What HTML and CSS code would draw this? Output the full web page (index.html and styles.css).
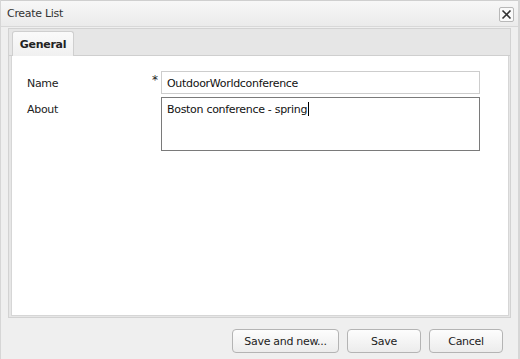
FILE: index.html
```html
<!DOCTYPE html>
<html>
<head>
<meta charset="utf-8">
<link rel="stylesheet" href="styles.css">
</head>
<body>
<div class="dialog">
  <div class="titlebar">
    <span class="title">Create List</span>
    <span class="close"><svg width="11" height="11" viewBox="0 0 11 11"><path d="M1.5 1.5 L9.5 9.5 M9.5 1.5 L1.5 9.5" stroke="#333" stroke-width="1.6" fill="none"/></svg></span>
  </div>
  <div class="body">
    <div class="tabpanel">
      <div class="tabstrip">
        <div class="tab">General</div>
      </div>
      <div class="content">
        <div class="row">
          <label class="label">Name</label>
          <span class="req">*</span>
          <div class="input">OutdoorWorldconference</div>
        </div>
        <div class="row">
          <label class="label">About</label>
          <span class="req"></span>
          <div class="textarea">Boston conference - spring<span class="caret"></span></div>
        </div>
      </div>
    </div>
    <div class="footer">
      <button class="btn btn-wide">Save and new...</button>
      <button class="btn">Save</button>
      <button class="btn">Cancel</button>
    </div>
  </div>
</div>
</body>
</html>
```
FILE: styles.css
```css
html, body { margin: 0; padding: 0; }
body {
  width: 520px;
  height: 359px;
  background: #f0f0f0;
  font-family: "DejaVu Sans", Verdana, sans-serif;
  font-size: 11px;
  letter-spacing: -0.3px;
  color: #222;
  overflow: hidden;
}
.dialog {
  box-sizing: border-box;
  width: 520px;
  height: 359px;
  display: flex;
  flex-direction: column;
  border-left: 1px solid #d6d6d6;
  border-right: 2px solid #d6d6d6;
  background: #efefef;
}
.titlebar {
  height: 25px;
  flex: none;
  display: flex;
  align-items: center;
  justify-content: space-between;
  padding: 0 4px 0 6px;
  background: linear-gradient(#f7f7f7, #ebebeb);
  border-top: 1px solid #cfcfcf;
  border-bottom: 1px solid #d8d8d8;
}
.title { font-size: 11px; color: #333; }
.close {
  box-sizing: border-box;
  width: 15px;
  height: 15px;
  border: 1px solid #b8b8b8;
  border-radius: 2px;
  background: #fafafa;
  display: flex;
  align-items: center;
  justify-content: center;
  margin-top: 1px;
}
.body {
  flex: 1;
  display: flex;
  flex-direction: column;
  padding: 1px 7px 0 7px;
}
.tabpanel {
  flex: 1;
  display: flex;
  flex-direction: column;
  border: 1px solid #d2d2d2;
  background: #e6e6e6;
}
.tabstrip {
  height: 26px;
  display: flex;
  align-items: flex-end;
  padding-left: 3px;
  border-bottom: 1px solid #cfcfcf;
  background: #e6e6e6;
}
.tab {
  box-sizing: border-box;
  width: 62px;
  height: 25px;
  margin-bottom: -1px;
  border: 1px solid #cfcfcf;
  border-bottom: none;
  border-radius: 3px 3px 0 0;
  background: linear-gradient(#fafafa, #f0f0f0);
  font-weight: bold;
  font-size: 11px;
  color: #222;
  display: flex;
  align-items: center;
  justify-content: center;
}
.content {
  flex: 1;
  background: #fff;
  margin: 0 1px 1px 2px;
  border: 1px solid #d6d6d6;
  border-top: none;
  padding: 15px 0 0 15px;
  display: flex;
  flex-direction: column;
  gap: 3px;
}
.row { display: flex; align-items: flex-start; }
.label { width: 125px; padding-top: 6px; font-size: 11px; }
.req { width: 9px; padding-top: 2px; font-size: 12px; }
.input, .textarea {
  box-sizing: border-box;
  width: 319px;
  border: 1px solid #c4c4c4;
  padding: 5px 5px 4px;
  font-size: 11px;
  color: #111;
}
.input { height: 23px; border-color: #cdcdcd; }
.textarea { height: 54px; border-color: #7a7a7a; padding-top: 4px; }
.caret {
  display: inline-block;
  width: 1px;
  height: 14px;
  background: #000;
  vertical-align: -3px;
  margin-left: 1px;
}
.footer {
  height: 41px;
  flex: none;
  display: flex;
  align-items: center;
  justify-content: flex-end;
  gap: 8px;
  padding: 5px 8px 0 0;
  box-sizing: border-box;
}
.btn {
  box-sizing: border-box;
  height: 24px;
  width: 74px;
  border: 1px solid #b4b4b4;
  border-radius: 4px;
  background: linear-gradient(#fdfdfd, #ececec);
  font-family: "DejaVu Sans", Verdana, sans-serif;
  font-size: 11px;
  letter-spacing: -0.3px;
  color: #222;
  padding: 0;
}
.btn-wide { width: 107px; }
```
